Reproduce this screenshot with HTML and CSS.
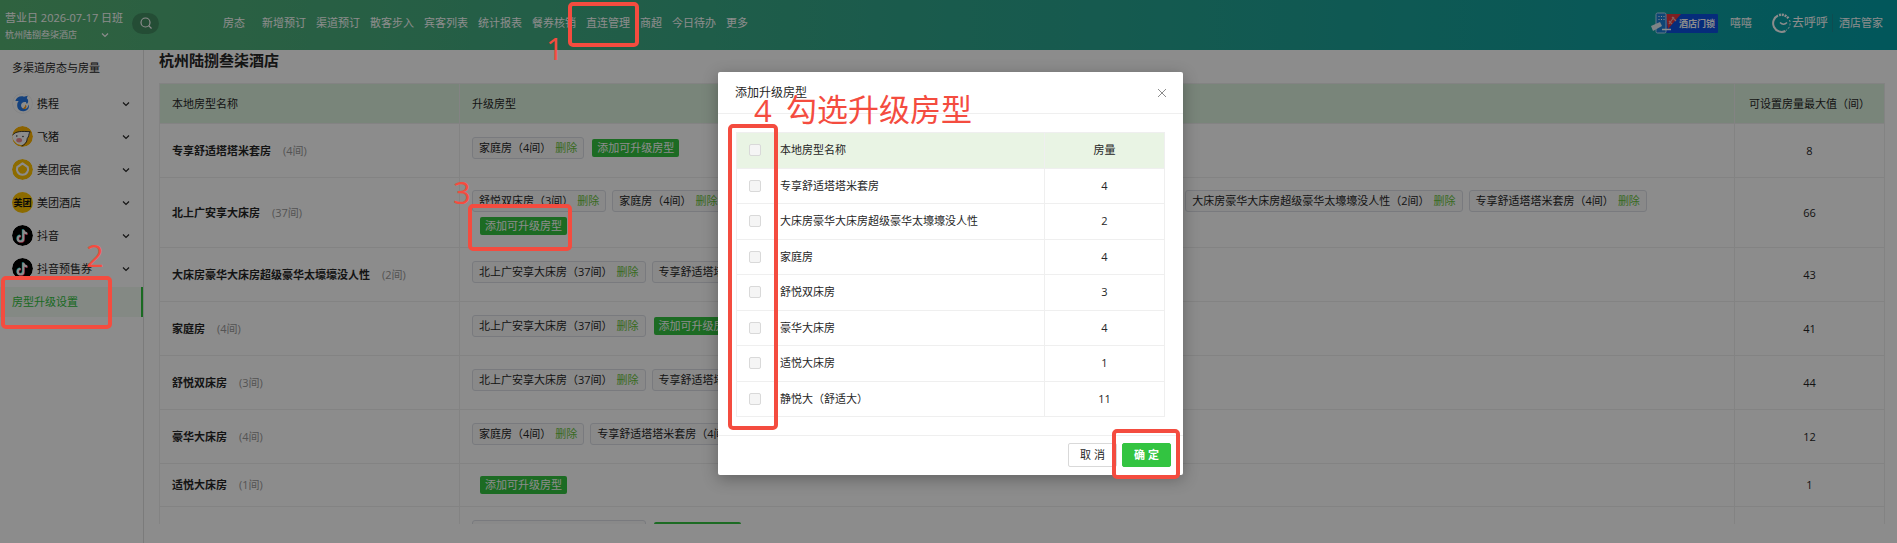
FILE: index.html
```
<!DOCTYPE html>
<html lang="zh-CN">
<head>
	<meta charset="UTF-8">
	<title>房型升级设置</title>
	<link rel="stylesheet" href="styles.css">
</head>
<body>
	<header class="header">
		<div class="account">
			<div class="date">营业日 2026-07-17 日班</div>
			<button class="hotel" type="button">杭州陆捌叁柒酒店
				<svg class="arrow" viewBox="0 0 8 8"><path d="M1 2.5l3 3 3-3"/></svg>
			</button>
		</div>
		<button class="search" type="button" aria-label="搜索">
			<svg viewBox="0 0 14 14"><circle cx="6.5" cy="6.5" r="4.5"/><path d="M9.7 9.7l2.8 2.8"/></svg>
		</button>
		<nav class="nav">
			<a href="#">房态</a>
			<a href="#">新增预订</a>
			<a href="#">渠道预订</a>
			<a href="#">散客步入</a>
			<a href="#">宾客列表</a>
			<a href="#">统计报表</a>
			<a href="#">餐券核销</a>
			<a href="#">直连管理</a>
			<a href="#">商超</a>
			<a href="#">今日待办</a>
			<a href="#">更多</a>
		</nav>
		<a class="lock" href="#">
			<svg viewBox="0 0 30 22">
				<path d="M15 2h15L17 17z" fill="#e8383d"/>
				<path d="M18 12l5-7M21 5l4 4M18 9l3 3" stroke="#f3b0a8" stroke-width="1.2" fill="none"/>
				<rect x="5" y="1" width="10" height="20" rx="1.5" fill="#1c7fd6" stroke="#b9dcf5"/>
				<path d="M7.5 4.5h1m1.5 0h1m1.5 0h1M7.5 7.5h1m1.5 0h1m1.5 0h1" stroke="#fff" stroke-width="1.2"/>
				<path d="M0 14l9-4 2 4-9 5z" fill="#e6eef5"/>
				<path d="M11 17.5h9" stroke="#fff" stroke-width="1.5"/>
			</svg>
			<span>酒店门锁</span>
		</a>
		<a class="user" href="#">嘻嘻</a>
		<div class="brand">
			<svg viewBox="0 0 20 20">
				<path d="M6 2.5A8.5 8.5 0 0 0 13.5 18" stroke-width="2"/>
				<path d="M7 2a8.5 8.5 0 0 1 9.500 3.500" stroke-width="2.500" stroke-dasharray="2 .8"/>
				<path d="M17.500 7a8.500 8.500 0 0 1-3.500 10.500" stroke-width="1" stroke-dasharray="2 1.500"/>
				<path d="M8 9.500q3.500 3.500 7 0" stroke-width="1.500"/>
			</svg>
			<b>去呼呼</b><span>酒店管家</span>
		</div>
	</header>

	<div class="wrap">
		<aside class="side">
			<h2>多渠道房态与房量</h2>
			<ul>
				<li><a href="#">
					<svg class="logo" viewBox="0 0 22 22">
						<circle cx="11" cy="11" r="10.5" fill="#fff" stroke="#eee"/>
						<path d="M3.500 8.500C4.500 4.500 9 2.500 12.500 4l4-1-1 2.500c2 1.500 2 4.500 0 6l-1-2c-3-.5-5 1-5 3.500 0 2.500 2 3.500 4 3.500 2.500 0 3.500-2 3.500-4.500 2 3-.5 7-5 7-4.500.2-7-3-6.500-7 .2-1.500.7-2.500 1.500-3.500z" fill="#2577e3"/>
						<path d="M14 12c1.500 1 1.500 3 0 4.500-1 .5-2 .3-3-.3 1.500-.5 3-2 3-4.200z" fill="#ff9a14"/>
					</svg>携程
					<svg class="arrow" viewBox="0 0 8 8"><path d="M1 2.5l3 3 3-3"/></svg></a></li>
				<li><a href="#">
					<svg class="logo" viewBox="0 0 22 22">
						<circle cx="11" cy="11" r="11" fill="#ffb400"/>
						<path d="M0 11C1 7 8 5 19 6c-1 3-1 5-3 7 0 4-4 7-7 7-5-1-8-5-9-9z" fill="#fff"/>
						<path d="M0 10C4 5 10 5.500 19 6c-2 3-1 5-3 7 0 4-3 7-6 8" fill="none" stroke="#333" stroke-width="1"/>
						<ellipse cx="7.500" cy="15" rx="3" ry="2.300" fill="#f28b92"/>
						<circle cx="5" cy="10.500" r=".8" fill="#333"/><circle cx="11.500" cy="11" r=".8" fill="#333"/>
					</svg>飞猪
					<svg class="arrow" viewBox="0 0 8 8"><path d="M1 2.5l3 3 3-3"/></svg></a></li>
				<li><a href="#">
					<svg class="logo" viewBox="0 0 22 22">
						<circle cx="11" cy="11" r="11" fill="#ffc300"/>
						<path d="M11 4.500l5.500 4c1 3-.5 8-5.500 8s-6.500-5-5.500-8z" fill="#ffc300" stroke="#fff" stroke-width="2.200" stroke-linejoin="round"/>
					</svg>美团民宿
					<svg class="arrow" viewBox="0 0 8 8"><path d="M1 2.5l3 3 3-3"/></svg></a></li>
				<li><a href="#">
					<span class="logo logo-mt">美团</span>美团酒店
					<svg class="arrow" viewBox="0 0 8 8"><path d="M1 2.5l3 3 3-3"/></svg></a></li>
				<li><a href="#">
					<svg class="logo" viewBox="0 0 22 22">
						<circle cx="11" cy="11" r="11"/>
						<g fill="none" stroke-width="2">
							<path d="M11.300 4.500v9.300a2.900 2.900 0 1 1-2.900-2.900M11.300 5c.4 2 1.800 3.200 4 3.400" stroke="#25f4ee"/>
							<path d="M12.500 5.500v9.300a2.900 2.900 0 1 1-2.900-2.900M12.500 6c.4 2 1.800 3.200 4 3.400" stroke="#fe2c55"/>
							<path d="M11.900 5v9.300a2.900 2.900 0 1 1-2.900-2.900M11.900 5.500c.4 2 1.800 3.200 4 3.400" stroke="#fff"/>
						</g>
					</svg>抖音
					<svg class="arrow" viewBox="0 0 8 8"><path d="M1 2.5l3 3 3-3"/></svg></a></li>
				<li><a href="#">
					<svg class="logo" viewBox="0 0 22 22">
						<circle cx="11" cy="11" r="11"/>
						<g fill="none" stroke-width="2">
							<path d="M11.300 4.500v9.300a2.900 2.900 0 1 1-2.900-2.900M11.300 5c.4 2 1.800 3.200 4 3.400" stroke="#25f4ee"/>
							<path d="M12.500 5.500v9.300a2.900 2.900 0 1 1-2.900-2.900M12.500 6c.4 2 1.800 3.200 4 3.400" stroke="#fe2c55"/>
							<path d="M11.900 5v9.300a2.900 2.900 0 1 1-2.900-2.900M11.900 5.500c.4 2 1.800 3.200 4 3.400" stroke="#fff"/>
						</g>
					</svg>抖音预售券
					<svg class="arrow" viewBox="0 0 8 8"><path d="M1 2.5l3 3 3-3"/></svg></a></li>
				<li class="active"><a href="#">房型升级设置</a></li>
			</ul>
		</aside>

		<main class="main">
			<h1>杭州陆捌叁柒酒店</h1>
			<div class="scroll">
				<table class="rooms">
					<colgroup><col class="c-name"><col><col class="c-max"></colgroup>
					<thead>
						<tr><th>本地房型名称</th><th>升级房型</th><th class="num">可设置房量最大值（间）</th></tr>
					</thead>
					<tbody>
						<tr>
							<td><b>专享舒适塔塔米套房</b><i>(4间)</i></td>
							<td><div class="tags">
								<span class="tag">家庭房（4间）<a href="#">删除</a></span>
								<button class="add" type="button">添加可升级房型</button>
							</div></td>
							<td class="num">8</td>
						</tr>
						<tr>
							<td><b>北上广安享大床房</b><i>(37间)</i></td>
							<td><div class="tags">
								<span class="tag">舒悦双床房（3间）<a href="#">删除</a></span>
								<span class="tag">家庭房（4间）<a href="#">删除</a></span>
								<span class="tag">豪华大床房（4间）<a href="#">删除</a></span>
								<span class="tag">适悦大床房（1间）<a href="#">删除</a></span>
								<span class="tag">静悦大（舒适大）（11间）<a href="#">删除</a></span>
								<span class="tag">大床房豪华大床房超级豪华太壕壕没人性（2间）<a href="#">删除</a></span>
								<span class="tag">专享舒适塔塔米套房（4间）<a href="#">删除</a></span>
							</div>
							<div class="line"><button class="add" type="button">添加可升级房型</button></div></td>
							<td class="num">66</td>
						</tr>
						<tr>
							<td><b>大床房豪华大床房超级豪华太壕壕没人性</b><i>(2间)</i></td>
							<td><div class="tags">
								<span class="tag">北上广安享大床房（37间）<a href="#">删除</a></span>
								<span class="tag">专享舒适塔塔米套房（4间）<a href="#">删除</a></span>
							</div></td>
							<td class="num">43</td>
						</tr>
						<tr>
							<td><b>家庭房</b><i>(4间)</i></td>
							<td><div class="tags">
								<span class="tag">北上广安享大床房（37间）<a href="#">删除</a></span>
								<button class="add" type="button">添加可升级房型</button>
							</div></td>
							<td class="num">41</td>
						</tr>
						<tr>
							<td><b>舒悦双床房</b><i>(3间)</i></td>
							<td><div class="tags">
								<span class="tag">北上广安享大床房（37间）<a href="#">删除</a></span>
								<span class="tag">专享舒适塔塔米套房（4间）<a href="#">删除</a></span>
							</div></td>
							<td class="num">44</td>
						</tr>
						<tr>
							<td><b>豪华大床房</b><i>(4间)</i></td>
							<td><div class="tags">
								<span class="tag">家庭房（4间）<a href="#">删除</a></span>
								<span class="tag">专享舒适塔塔米套房（4间）<a href="#">删除</a></span>
							</div></td>
							<td class="num">12</td>
						</tr>
						<tr class="short">
							<td><b>适悦大床房</b><i>(1间)</i></td>
							<td><div class="line"><button class="add" type="button">添加可升级房型</button></div></td>
							<td class="num">1</td>
						</tr>
						<tr>
							<td></td>
							<td><div class="tags">
								<span class="tag">北上广安享大床房（37间）<a href="#">删除</a></span>
								<button class="add" type="button">添加可升级房型</button>
							</div></td>
							<td></td>
						</tr>
					</tbody>
				</table>
			</div>
		</main>
	</div>

	<div class="mask">
		<div class="modal" role="dialog" aria-labelledby="modal-title">
			<div class="modal-head">
				<h3 id="modal-title">添加升级房型</h3>
				<button class="close" type="button" aria-label="关闭">
					<svg viewBox="0 0 10 10"><path d="M1 1l8 8M9 1l-8 8"/></svg>
				</button>
			</div>
			<div class="modal-body">
				<table class="pick">
					<colgroup><col class="c-check"><col><col class="c-count"></colgroup>
					<tbody>
						<tr><th><input type="checkbox" aria-label="全选"></th><th>本地房型名称</th><th class="num">房量</th></tr>
						<tr><td><input type="checkbox" id="r1"></td><td><label for="r1">专享舒适塔塔米套房</label></td><td class="num">4</td></tr>
						<tr><td><input type="checkbox" id="r2"></td><td><label for="r2">大床房豪华大床房超级豪华太壕壕没人性</label></td><td class="num">2</td></tr>
						<tr><td><input type="checkbox" id="r3"></td><td><label for="r3">家庭房</label></td><td class="num">4</td></tr>
						<tr><td><input type="checkbox" id="r4"></td><td><label for="r4">舒悦双床房</label></td><td class="num">3</td></tr>
						<tr><td><input type="checkbox" id="r5"></td><td><label for="r5">豪华大床房</label></td><td class="num">4</td></tr>
						<tr><td><input type="checkbox" id="r6"></td><td><label for="r6">适悦大床房</label></td><td class="num">1</td></tr>
						<tr><td><input type="checkbox" id="r7"></td><td><label for="r7">静悦大（舒适大）</label></td><td class="num">11</td></tr>
					</tbody>
				</table>
			</div>
			<div class="modal-foot">
				<button class="btn" type="button">取 消</button>
				<button class="btn btn-ok" type="button">确 定</button>
			</div>
			<div class="mark mark-check"></div>
			<div class="mark mark-ok"></div>
			<div class="step step-4">4</div>
			<div class="step step-text">勾选升级房型</div>
		</div>
	</div>

	<!-- 操作步骤标注 -->
	<div class="mark mark-nav"></div>
	<div class="mark mark-side"></div>
	<div class="mark mark-add"></div>
	<div class="step step-1">1</div>
	<div class="step step-2">2</div>
	<div class="step step-3">3</div>
</body>
</html>
```
FILE: styles.css
```
*{padding: 0; margin: 0; box-sizing: border-box;}
body{
	height: 100vh; display: flex; flex-direction: column; overflow: hidden; position: relative;
	font: 11px/18px "Open Sans", "Noto Sans CJK SC", sans-serif; color: #262626; background: #fff;
}
a{color: inherit; text-decoration: none;}
ul{list-style: none;}
i{font-style: normal;}
button{font: inherit; color: inherit; border: 0; background: none; cursor: pointer;}
table{width: 100%; table-layout: fixed; border-collapse: collapse;}
th{font-weight: 400; text-align: left;}
.arrow{width: 8px; height: 8px; fill: none; stroke: currentColor; stroke-width: 1.2;}

/* header */
.header{
	height: 50px; flex: none; display: flex; align-items: center; padding: 0 14px 4px 5px; white-space: nowrap;
	color: #fff; background: linear-gradient(90deg, #57b274, #2fa68c 50%, #049ea7);
}
.account{width: 127px; padding-top: 5px;}
.account .date{line-height: 18px;}
.account .hotel{display: flex; align-items: center; justify-content: space-between; width: 104px; font-size: 9px; line-height: 16px;}
.search{width: 27px; height: 21px; border-radius: 11px; background: #428c62; display: flex; align-items: center; justify-content: center;}
.search svg{width: 14px; height: 14px; fill: none; stroke: #fff; stroke-width: 1.2;}
.nav{display: flex; gap: 10px; margin: 0 auto 0 64px;}
.nav a:first-child{margin-right: 7px;}
.lock{display: flex; align-items: center;}
.lock svg{position: relative; width: 30px; height: 22px;}
.lock span{height: 19px; margin-left: -15px; padding: 0 3px 0 13px; background: #0b50e0; border-radius: 1px; font-size: 9px; font-weight: 700; line-height: 19px;}
.user{margin: 0 20px 0 12px;}
.brand{display: flex; align-items: center;}
.brand svg{width: 20px; height: 20px; fill: none; stroke: #fff;}
.brand b{font-size: 12px; font-weight: 400; padding-right: 4px; border-right: 1px solid #1c8a92;}
.brand span{padding-left: 6px;}

/* sidebar */
.wrap{flex: 1; display: flex; min-height: 0;}
.side{width: 144px; flex: none; border-right: 1px solid #e0e0e0;}
.side h2{font-size: 11px; font-weight: 400; padding: 9px 12px 10px;}
.side li a{display: flex; align-items: center; height: 33px; padding: 0 13px 0 12px;}
.side .logo{width: 21px; height: 21px; margin-right: 4px; border-radius: 50%;}
.side .logo-mt{background: #ffc300; font-size: 9px; font-weight: 700; line-height: 21px; text-align: center; color: #111;}
.side .arrow{margin-left: auto;}
.side .active a{height: 30px; margin-top: 2px; color: #30c13e; background: #f0f9f0; border-right: 2px solid #30c13e;}

/* main table */
.main{flex: 1; min-width: 0; display: flex; flex-direction: column; padding: 0 12px 19px 15px;}
.main h1{font-size: 15px; font-weight: 700; line-height: 20px; margin-bottom: 13px;}
.scroll{flex: 1; overflow: hidden;}
.rooms th,.rooms td{padding: 0 12px; border: 1px solid #efefef;}
.rooms th{height: 40px; background: #dcf2de;}
.rooms td{height: 54px; padding: 12px;}
.rooms .short td{height: 43px;}
.rooms .c-name{width: 300px;}
.rooms .c-max{width: 150px;}
.rooms b{font-weight: 700;}
.rooms i{color: #999; margin-left: 12px;}
.rooms .tags{display: flex; gap: 6px; height: 22px; margin-bottom: 5px; white-space: nowrap;}
.tag{height: 22px; padding: 0 6px; border: 1px solid #dcdfe6; border-radius: 3px; background: #fafafa; line-height: 20px;}
.tag a{margin-left: 4px; color: #67c23a;}
.add{height: 18px; padding: 0 5px; border-radius: 2px; color: #fff; background: #33c441; line-height: 18px; white-space: nowrap;}
.tags .add{margin: 2px 0 0 2px;}
.line{display: flex; padding-left: 8px;}
.rooms .num,.pick .num{padding: 0; text-align: center;}

/* modal */
.mask{position: absolute; top: 0; left: 0; right: 0; bottom: 0; background: rgba(0,0,0,.45);}
.modal{position: relative; width: 465px; margin: 72px 0 0 718px; background: #fff; border-radius: 2px; box-shadow: 0 4px 16px rgba(0,0,0,.3);}
.modal-head{display: flex; align-items: center; justify-content: space-between; height: 42px; padding: 0 16px 0 17px; border-bottom: 1px solid #efefef;}
.modal-head h3{font-size: 12px; font-weight: 400;}
.close{width: 10px; height: 10px; display: flex;}
.close svg{width: 10px; height: 10px; fill: none; stroke: #8c8c8c;}
.modal-body{padding: 18px;}
.pick{height: 285px;}
.pick th,.pick td{height: 35px; padding: 0 5px; border: 1px solid #efefef;}
.pick th{background: #e9f4e4;}
.pick .c-check{width: 38px;}
.pick .c-count{width: 120px;}
.pick th:first-child,.pick td:first-child{padding-left: 12px;}
.pick input{appearance: none; display: block; width: 12px; height: 12px; border: 1px solid #d9d9d9; border-radius: 2px; background: #f5f5f5;}
.modal-foot{display: flex; justify-content: flex-end; gap: 5px; padding: 7px 12px 8px; border-top: 1px solid #efefef;}
.btn{width: 49px; height: 24px; border: 1px solid #d9d9d9; border-radius: 2px; line-height: 22px;}
.btn-ok{border-color: #33c441; background: #33c441; color: #fff; font-weight: 700;}

/* step marks */
.mark{position: absolute; border: 4px solid #f44c3f; border-radius: 5px; pointer-events: none;}
.mark-nav{left: 568px; top: 2px; width: 71px; height: 45px;}
.mark-side{left: 1px; top: 276px; width: 111px; height: 53px;}
.mark-add{left: 468px; top: 204px; width: 104px; height: 47px;}
.mark-check{left: 10px; top: 52px; width: 50px; height: 306px;}
.mark-ok{left: 394px; top: 357px; width: 68px; height: 50px;}
.step{position: absolute; color: #f44c3f; font-size: 31px; line-height: 36px; white-space: nowrap; pointer-events: none;}
.step-1{left: 546px; top: 30px;}
.step-2{left: 86px; top: 237px;}
.step-3{left: 453px; top: 174px;}
.step-4{left: 36px; top: 20px;}
.step-text{left: 68px; top: 19px;}
```
